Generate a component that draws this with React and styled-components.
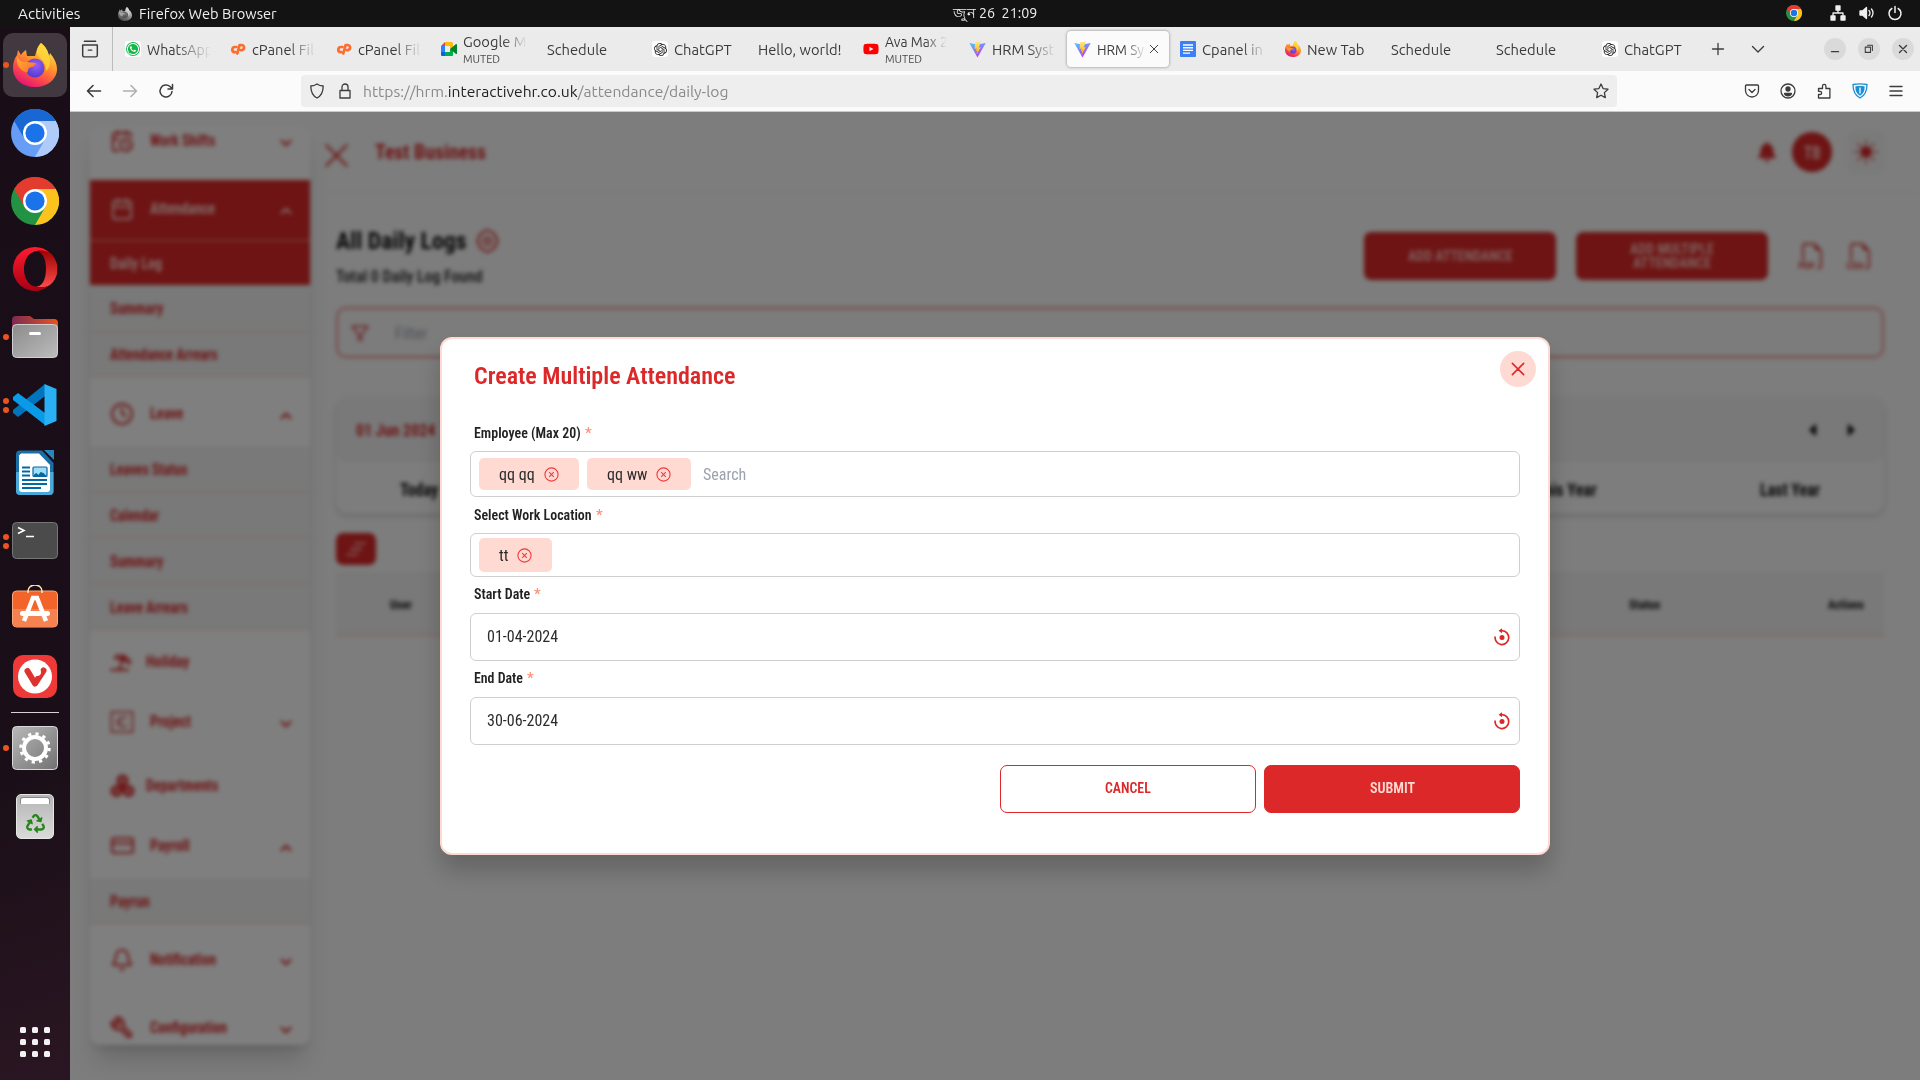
import React, { useLayoutEffect, useRef, useState } from 'react';
import styled, { createGlobalStyle, css } from 'styled-components';
import { Calendar, CalendarClock, Clock, CreditCard, Bell, Wrench, ChevronDown, ChevronUp, Filter } from 'lucide-react';
import { FaUmbrellaBeach, FaWhatsapp, FaYoutube, FaBell, FaRecycle } from 'react-icons/fa';
import { BsFiletypePdf, BsFiletypeCsv, BsSunFill } from 'react-icons/bs';
import { SiOpenai } from 'react-icons/si';

const RED = '#dc2828';
const PINK = '#ffdad3';

const Global = createGlobalStyle`
  * { box-sizing: border-box; }
  html, body { margin: 0; width: 1920px; height: 1080px; overflow: hidden; background: #131313; }
  body { font-family: 'Ubuntu', 'Noto Sans', 'Open Sans', sans-serif; }
  svg { display: block; flex: none; }
  button { font: inherit; cursor: pointer; padding: 0; }
`;

const COND = "'Roboto Condensed', Roboto, 'Liberation Sans', sans-serif";

/* ---------- fitted text ---------- */
const FitBox = styled.span`
  display: inline-block;
  flex: none;
  white-space: pre;
  text-align: left;
`;
const FitInner = styled.span`
  display: inline-block;
  transform-origin: 0 50%;
`;
function Fit({ w, children }) {
  const ref = useRef(null);
  const [k, setK] = useState(1);
  useLayoutEffect(() => {
    if (ref.current) setK(w / ref.current.offsetWidth);
  }, [w]);
  return (
    <FitBox style={{ width: w }}>
      <FitInner ref={ref} style={{ transform: `scaleX(${k})` }}>{children}</FitInner>
    </FitBox>
  );
}

/* ---------- logos ---------- */
const FirefoxLogo = ({ size = 44, grey }) => (
  <svg width={size} height={size} viewBox="0 0 44 44" style={grey ? { filter: 'grayscale(1)' } : undefined}>
    <defs>
      <linearGradient id="fxA" x1=".8" y1="0" x2=".25" y2="1">
        <stop offset="0" stopColor="#fff14f" /><stop offset=".4" stopColor="#ff9a2b" />
        <stop offset=".7" stopColor="#ff4a48" /><stop offset="1" stopColor="#e0107a" />
      </linearGradient>
      <radialGradient id="fxB" cx=".55" cy=".35" r=".7">
        <stop offset="0" stopColor="#9a5cff" /><stop offset="1" stopColor="#4d3bbf" />
      </radialGradient>
      <linearGradient id="fxC" x1="0" y1="0" x2="1" y2="1">
        <stop offset="0" stopColor="#ffb52e" /><stop offset="1" stopColor="#ff6a2e" />
      </linearGradient>
    </defs>
    <path d="M28 0c5 4 7 8 8 13l1-3c4 5 7 10 7 16 0 10-9 18-22 18S0 36 0 25c0-5 1-9 4-13l1-5 3 5c1-2 3-4 5-5l1 6 8 0c2-6 2-9 6-13z" fill="url(#fxA)" />
    <circle cx="22" cy="25" r="9.5" fill="url(#fxB)" />
    <path d="M4 13c2 5 5 6 10 6l9 1c-1 4-5 4-7 5-2 2 0 6-4 4C5 26 3 19 4 13z" fill="url(#fxC)" />
    <path d="M28 0c5 4 7 8 8 13 2 6 1 12-3 15 0-7-3-11-7-14-3-3-3-9 2-14z" fill="#ffd93b" opacity=".75" />
  </svg>
);
const ChromeLogo = ({ size = 48, c = ['#e33b2e', '#fcc31e', '#229342'] }) => (
  <svg width={size} height={size} viewBox="0 0 48 48">
    <circle cx="24" cy="24" r="24" fill={c[2]} />
    <path d="M24 12h20.8A24 24 0 0 1 24 48l10.4-18z" fill={c[1]} />
    <path d="M3.2 12A24 24 0 0 1 44.8 12H24L13.6 30z" fill={c[0]} />
    <circle cx="24" cy="24" r="12" fill="#fff" />
    <circle cx="24" cy="24" r="9.6" fill="#1a73e8" />
  </svg>
);
const OperaLogo = () => (
  <svg width="44" height="44" viewBox="0 0 44 44">
    <defs>
      <linearGradient id="opA" x1="0" y1="0" x2="0" y2="1"><stop offset="0" stopColor="#ff1b2d" /><stop offset="1" stopColor="#a70014" /></linearGradient>
      <linearGradient id="opB" x1="0" y1="0" x2="0" y2="1"><stop offset="0" stopColor="#9c0000" /><stop offset="1" stopColor="#ff4b4b" /></linearGradient>
    </defs>
    <path d="M22 4c10 0 22 4 22 18S34 40 22 40c8 0 11-9 11-18S30 4 22 4z" fill="url(#opB)" />
    <path d="M24 3c8 0 14 2 16 6 6 8 6 18 0 26-4 5-10 6-16 5 6-1 10-8 10-18S30 4 24 3z" fill="url(#opB)" />
    <path fillRule="evenodd" d="M22 0c6 0 11 2 15 6-4-2-8-3-13-2-8 1-13 8-13 18s5 17 13 18c5 1 9 0 13-2A22 22 0 1 1 22 0z" fill="url(#opA)" />
  </svg>
);
const FilesLogo = () => (
  <svg width="46" height="42" viewBox="0 0 46 42">
    <defs>
      <linearGradient id="flA"><stop offset="0" stopColor="#7b2a52" /><stop offset="1" stopColor="#e95420" /></linearGradient>
      <linearGradient id="flB" x1="0" y1="0" x2="1" y2="1"><stop offset="0" stopColor="#8b8b8b" /><stop offset="1" stopColor="#bcbcbc" /></linearGradient>
    </defs>
    <path d="M0 4a4 4 0 0 1 4-4h14l4 3h20a4 4 0 0 1 4 4v12H0z" fill="url(#flA)" />
    <rect x=".5" y="8.500" width="45" height="33" rx="4" fill="url(#flB)" stroke="#d0d0d0" />
    <rect x="17" y="16" width="12" height="3" rx="1.500" fill="#fff" />
  </svg>
);
const CodeLogo = () => (
  <svg width="44" height="44" viewBox="0 0 44 44">
    <path d="M32 1v12L5 34 0 30v-3z" fill="#0074bc" />
    <path d="M0 14l5-4 27 20v12L0 17z" fill="#0a9ae8" />
    <path d="M31.500 1l12 5v32l-12 5z" fill="#29b0f5" />
  </svg>
);
const WriterLogo = () => (
  <svg width="38" height="46" viewBox="0 0 38 46">
    <path d="M4 .5h22L37.500 13v28a4 4 0 0 1-4 4H4a4 4 0 0 1-4-4V4.500a4 4 0 0 1 4-4z" fill="#1a6ea5" />
    <path d="M0 22h37.500v19a4 4 0 0 1-4 4H4a4 4 0 0 1-4-4z" fill="#4aa9d9" />
    <path d="M28 0h10v10z" fill="#2a86bd" />
    <path d="M5 3.500h18L34 15v24a3 3 0 0 1-3 3H6a3 3 0 0 1-3-3V5.500z" fill="#fff" />
    <path d="M6 17.500h8M6 21.500h8M6 25.500h8M6 30h25M6 34h25M6 38h19" stroke="#0369a3" strokeWidth="1.800" />
    <rect x="17" y="17" width="14" height="9.500" rx="1" fill="#9fdcf8" stroke="#0369a3" strokeWidth="1.200" />
    <path d="M17.500 26c1-3 3-4 5-1l2-3 3 1 3 3z" fill="#0369a3" />
  </svg>
);
const TerminalLogo = () => (
  <svg width="46" height="38" viewBox="0 0 46 38">
    <rect x=".5" y=".5" width="45" height="36" rx="4" fill="#4b4b4b" stroke="#767676" />
    <path d="M6 5.500l6 3-6 3M14 14.500h8" fill="none" stroke="#fff" strokeWidth="1.600" />
  </svg>
);
const SoftwareLogo = () => (
  <svg width="46" height="49" viewBox="0 0 46 49">
    <rect x=".5" y="6" width="45" height="36" rx="4" fill="#f26429" stroke="#f9a77d" />
    <path d="M1 24h44v14a4 4 0 0 1-4 4H5a4 4 0 0 1-4-4z" fill="#f58250" />
    <path d="M16 8V6a7 6 0 0 1 14 0v2" fill="none" stroke="#fde3a8" strokeWidth="1.600" />
    <path d="M12 36l9-23h4l9 23" fill="none" stroke="#fff" strokeWidth="4.500" />
    <rect x="8" y="26" width="30" height="5" rx="2.500" fill="#fff" />
  </svg>
);
const VivaldiLogo = () => (
  <svg width="44" height="44" viewBox="0 0 44 44">
    <rect width="44" height="43" rx="10" fill="#ef3939" />
    <circle cx="22" cy="21.500" r="17" fill="#fff" />
    <path d="M14.500 16L22 28.500 30.500 15.500" fill="none" stroke="#dd3330" strokeWidth="6" strokeLinecap="round" strokeLinejoin="round" />
    <circle cx="24" cy="17" r="4" fill="#fff" />
  </svg>
);
const SettingsLogo = () => (
  <svg width="46" height="46" viewBox="0 0 46 46">
    <defs><linearGradient id="stA" x1="0" y1="0" x2="1" y2="1"><stop offset="0" stopColor="#b9b9b9" /><stop offset="1" stopColor="#717171" /></linearGradient></defs>
    <rect x=".5" y="1.500" width="45" height="43" rx="4" fill="url(#stA)" stroke="#d8d8d8" />
    <circle cx="23" cy="23" r="11" fill="none" stroke="#fff" strokeWidth="4" />
    <circle cx="23" cy="23" r="14.200" fill="none" stroke="#fff" strokeWidth="3" strokeDasharray="3.200 4.235" />
  </svg>
);
const TrashBody = styled.div`
  width: 38px; height: 45px; border-radius: 5px;
  background: linear-gradient(#b5b5b5, #dadada);
  border: 1px solid #e6e6e6;
  display: flex; flex-direction: column; align-items: center; gap: 10px;
  padding-top: 2px; color: #26861d;
`;
const TrashSlot = styled.div`
  width: 30px; height: 7px; border-radius: 3px 3px 0 0; background: #fff; border: 1px solid #8a8a8a; border-bottom: 0;
`;
const AppsGrid = styled.div`
  display: grid; grid-template-columns: repeat(3, 6px); grid-auto-rows: 6px; align-content: start; gap: 6px;
  i { width: 6px; height: 6px; border-radius: 1.5px; background: #f2f2f2; }
`;
const ViteLogo = () => (
  <svg width="17" height="17" viewBox="0 0 17 17">
    <defs>
      <linearGradient id="vtA" x1="0" y1="0" x2=".6" y2="1"><stop offset="0" stopColor="#41d1ff" /><stop offset="1" stopColor="#bd34fe" /></linearGradient>
      <linearGradient id="vtB" x1="0" y1="0" x2="0" y2="1"><stop offset="0" stopColor="#ffea83" /><stop offset="1" stopColor="#ffa800" /></linearGradient>
    </defs>
    <path d="M.3 2l8 1.400L16.700 2 8.500 16.500z" fill="url(#vtA)" />
    <path d="M12 .2L6 1.400 5.600 8l1.900-.4-.5 2.600 1.300-.4-.8 4.200 4.300-7.800-2 .4z" fill="url(#vtB)" />
  </svg>
);
const CpanelLogo = () => (
  <svg width="16" height="16" viewBox="0 0 16 16" fill="none" stroke="#ff6c2c" strokeWidth="2.700" strokeLinecap="round" strokeLinejoin="round">
    <path d="M6.500 6H4.800a2.600 2.600 0 0 0-.6 5.100h1.300" />
    <path d="M7.300 12.500L9.600 4h2.200a2.600 2.600 0 0 1 .3 5.100h-1.300" />
  </svg>
);
const MeetLogo = () => (
  <svg width="16" height="16" viewBox="0 0 16 16">
    <path d="M0 5l4-4v4z" fill="#ea4335" /><path d="M4 1h7v4H4z" fill="#fbbc04" />
    <path d="M0 5h4v6H0z" fill="#2684fc" /><path d="M0 11h4v4H1a1 1 0 0 1-1-1z" fill="#0066da" />
    <path d="M4 11h5V8l3-2v8a1 1 0 0 1-1 1H4z" fill="#00ac47" />
    <path d="M11 1l1 1v4L9 8V5h2z" fill="#fbbc04" /><path d="M9 8l6-5c.5-.3 1 0 1 .5v9c0 .5-.5.800-1 .5z" fill="#00832d" />
  </svg>
);
const DocsLogo = () => (
  <svg width="16" height="16" viewBox="0 0 16 16">
    <rect width="16" height="16" rx="1" fill="#3d7ff5" />
    <path d="M3 4h10M3 6.700h10M3 9.400h10M3 12.100h7" stroke="#fff" strokeWidth="1.400" />
  </svg>
);
const White = styled.span`
  display: flex; align-items: center; justify-content: center; flex: none;
  width: 16px; height: 16px; border-radius: 3px; background: #fff; color: ${p => p.$c || '#222'};
`;

/* ---------- line icons ---------- */
const Line = ({ s = 16, d, w = 1.4, c = '#3c3c3c', children }) => (
  <svg width={s} height={s} viewBox="0 0 16 16" fill="none" stroke={c} strokeWidth={w} strokeLinecap="round" strokeLinejoin="round">
    {d && <path d={d} />}{children}
  </svg>
);

/* ---------- system bar ---------- */
const Screen = styled.div`
  width: 1920px; height: 1080px; display: flex; flex-direction: column; overflow: hidden; background: #131313;
`;
const SystemBar = styled.header`
  height: 27px; flex: none; display: grid; grid-template-columns: 1fr auto 1fr; align-items: center;
  color: #f0f0f0; font-size: 14px; line-height: 20px;
`;
const BarLeft = styled.div`
  display: flex; align-items: center; padding-left: 18px;
  svg { margin: 0 7px 0 38px; }
`;
const BarClock = styled.div`display: flex; align-items: center; gap: 4px; padding: 0 0 1px 70px; margin-left: -1px; width: 154px;`;
const BarRight = styled.div`
  display: flex; align-items: center; justify-content: flex-end; padding: 0 17px 1px 0; gap: 12.5px;
  svg:first-child { margin-right: 16px; }
`;
const Below = styled.div`display: flex; flex: 1; min-height: 0;`;

/* ---------- dock ---------- */
const Dock = styled.nav`
  width: 70px; flex: none; display: flex; flex-direction: column; padding-top: 4px;
  background: linear-gradient(160deg, #190e17 0%, #1a0f18 70%, #2a1622 100%);
`;
const Slot = styled.div`
  height: ${p => p.$h || 68}px; flex: none; display: grid; grid-template-columns: 3px 64px 3px; align-items: center;
`;
const SlotInner = styled.div`
  height: 64px; border-radius: 10px; display: flex; align-items: center; justify-content: center;
  ${p => p.$on && css`background: #423840;`}
`;
const Dots = styled.div`
  width: 6px; display: flex; flex-direction: column; gap: 3px; position: relative; left: 3px; z-index: 1;
  i { width: 6px; height: 6px; border-radius: 50%; background: #e95420; }
`;
const DockRule = styled.div`height: 1px; width: 48px; margin: 1px auto 1px; background: #d6d2d5;`;
const DockEnd = styled.div`margin-top: auto; height: 53px; display: flex; justify-content: center;`;

/* ---------- browser ---------- */
const Browser = styled.div`flex: 1; min-width: 0; display: flex; flex-direction: column; background: #fbfbfb;`;
const TabBar = styled.div`height: 44px; flex: none; display: flex; align-items: center; background: #ebebeb; color: #3a3a3a; font-size: 14px;`;
const TabsHome = styled.div`width: 42.500px; height: 44px; display: flex; align-items: center; justify-content: center; padding-right: 2px; border-right: 1px solid #bcbcbc;`;
const TabList = styled.div`display: flex; padding-left: 3px;`;
const Tab = styled.div`
  width: 105.500px; height: 44px; padding: 4px 2px;
`;
const TabFace = styled.div`
  height: 36px; border-radius: 4px; display: flex; align-items: center; gap: 6px; padding: 0 7px;
  ${p => p.$active && css`background: #fbfbfb; box-shadow: 0 0 3px rgba(0,0,0,.45);`}
`;
const TabText = styled.div`
  flex: 1; min-width: 0; overflow: hidden; display: flex; flex-direction: column; line-height: 18px; padding-top: 1px;
  ${p => p.$fade && css`mask-image: linear-gradient(90deg, #000 ${p.$fade}px, transparent ${p.$end || 64}px); max-width: 66px;`}
  ${p => p.$two && css`padding-top: 0;`}
  small { font-size: 11px; line-height: 14px; margin-top: 1px; color: #4a4a4a; }
`;
const TabClose = styled.span`display: flex; margin: 0 2px 0 -4px;`;
const TabTools = styled.div`display: flex; align-items: center; gap: 24px; padding-left: 12px; flex: 1;`;
const WinButtons = styled.div`display: flex; gap: 12px; padding-right: 6px;`;
const WinButton = styled.button`width: 22px; height: 22px; border: 0; border-radius: 50%; background: #dadada; display: flex; align-items: center; justify-content: center;`;
const NavBar = styled.div`
  height: 41px; flex: none; display: flex; align-items: center; border-bottom: 1px solid #c9c9c9; padding-left: 16px;
`;
const NavButtons = styled.div`display: flex; gap: 20px; width: 215px;`;
const UrlBar = styled.div`
  width: 1316px; height: 32px; border-radius: 4px; background: #eeeeee; display: flex; align-items: center;
  padding: 0 8px; gap: 12px; font-size: 15px; color: #8a8a8a;
  b { font-weight: 400; color: #222; }
`;
const UrlText = styled.span`margin-left: -2px; display: flex;`;
const Push = styled.span`margin-left: auto;`;
const NavEnd = styled.div`display: flex; gap: 20px; margin-left: auto; padding-right: 16px;`;

/* ---------- page ---------- */
const Viewport = styled.main`position: relative; flex: 1; min-height: 0; overflow: hidden; background: #fafafa;`;
const Page = styled.div`display: flex; width: 1850px; height: 968px; font-family: ${COND}; color: #111;`;
const SideWrap = styled.aside`width: 254px; flex: none; padding: 14px 0 0 20px;`;
const Side = styled.div`
  width: 220px; height: 919px; background: #fff; border-radius: 10px; overflow: hidden; display: flex; flex-direction: column;
  color: ${RED}; font-weight: 700;
`;
const SideShadow = styled.div`border-radius: 10px; width: 220px; box-shadow: 0 20px 25px -6px rgba(0,0,0,.16), 0 6px 10px -5px rgba(0,0,0,.16);`;
const SideItem = styled.div`
  height: ${p => p.$h}px; flex: none; display: flex; align-items: center; padding: 0 15px 0 20px; font-size: 16px; line-height: 20px;
  ${p => p.$pt && css`padding-top: ${p.$pt}px;`}
  ${p => p.$pb && css`padding-bottom: ${p.$pb}px;`}
  ${p => p.$active && css`background: ${RED}; color: #ffd5d0;`}
`;
const SideIcon = styled.span`width: ${p => p.$w || 40}px; display: flex;`;
const Chevron = styled.span`margin-left: auto; padding-top: 4px; display: flex;`;
const SubItem = styled.div`
  height: ${p => p.$h}px; flex: none; display: flex; align-items: center; padding: 3px 0 0 20px; font-size: 16px; line-height: 20px;
  background: #f2f2f2; border-bottom: 1.5px solid #f5cfca;
  ${p => p.$active && css`background: ${RED}; color: #ffd5d0; padding-top: 1px; border-top: 1.5px solid #f7a8a0; border-bottom: 0;`}
`;
const Content = styled.section`flex: 1; min-width: 0; display: flex; flex-direction: column;`;
const TopRow = styled.div`height: 81px; display: flex; align-items: center; border-bottom: 1px solid #f5f5f5; padding: 0 35px 0 0; color: ${RED};`;
const Burger = styled.span`padding-top: 6px; display: flex;`;
const Brand = styled.div`font-size: 20px; font-weight: 700; margin: 0 0 0 26px;`;
const TopRight = styled.div`margin-left: auto; display: flex; align-items: center; gap: 15px;`;
const Avatar = styled.div`width: 40px; height: 40px; border-radius: 50%; background: ${RED}; color: #ffd5d0; font-weight: 600; font-size: 18px; display: flex; align-items: center; justify-content: center;`;
const ThemeBox = styled.div`width: 38px; height: 43px; border-radius: 8px; background: #f5f5f5; display: flex; align-items: center; justify-content: center;`;
const Body = styled.div`padding: 37px 36px 0 12px; display: flex; flex-direction: column;`;
const HeadRow = styled.div`display: flex; justify-content: space-between; height: 77px;`;
const HeadText = styled.div`margin-top: -6px;`;
const Heading = styled.div`font-size: 24px; line-height: 32px; font-weight: 700; display: flex; align-items: center; gap: 9px; height: 36px; padding-bottom: 2px;`;
const Sub = styled.div`font-size: 17px; line-height: 34px; color: #222; font-weight: 500; margin-top: -1px;`;
const Actions = styled.div`display: flex; align-items: center; gap: 20px; height: 49px; margin-top: 1px; padding-right: 11px; color: ${RED};`;
const BigButton = styled.button`
  width: 192px; height: 48px; border: 0; border-radius: 7px; background: ${RED}; color: #ffc9c2; font-size: 15px; line-height: 14px; font-weight: 600;
  display: flex; flex-direction: column; align-items: center; justify-content: center;
`;
const FileIcons = styled.div`display: flex; gap: 22px; margin-left: 11px;`;
const FilterBox = styled.div`
  height: 51px; border: 2px solid #f08c88; border-radius: 10px; background: #f8f8f8; display: flex; align-items: center; gap: 26px;
  padding-left: 13px; font-size: 17px; color: #9ca3af;
`;
const Range = styled.div`
  margin-top: 40px; border-radius: 12px; overflow: hidden; background: #fafafa; box-shadow: 0 2px 5px rgba(0,0,0,.18); height: 116px;
`;
const RangeTop = styled.div`
  height: 64px; background: #f2f2f2; border-radius: 12px; display: flex; align-items: center; justify-content: space-between; padding: 0 25px 0 20px;
  color: ${RED}; font-size: 17px; font-weight: 700;
`;
const Arrows = styled.div`display: flex; gap: 22px;`;
const RangeTabs = styled.div`
  height: 54px; display: grid; grid-template-columns: 166px 1fr 180px 260px 188px; align-items: center; justify-items: center; font-size: 18px; font-weight: 700;
`;
const Toggle = styled.button`margin-top: 19px; width: 40px; height: 32px; border: 0; border-radius: 7px; background: ${RED}; display: flex; align-items: center; justify-content: center;`;
const TableHead = styled.div`
  margin-top: 7px; height: 64px; background: #f2f2f2; border-bottom: 2px solid #fbd5cc; display: grid; grid-template-columns: 130px 1fr 130px 99px 76px;
  align-items: center; justify-items: center; font-size: 13px; font-weight: 700; padding-top: 2px;
`;

/* ---------- modal ---------- */
const Backdrop = styled.div`
  position: absolute; inset: 0; background: rgba(0,0,0,.5); backdrop-filter: blur(2px);
  display: flex; align-items: flex-start; padding: 225px 0 0 370px; font-family: ${COND};
`;
const Dialog = styled.div`
  width: 1110px; height: 518px; background: #fff; border: 2px solid ${PINK}; border-radius: 12px; padding: 12px 28px 0;
  box-shadow: 0 16px 24px rgba(0,0,0,.2); display: flex; flex-direction: column; color: #222;
`;
const DialogHead = styled.div`display: flex; justify-content: space-between; height: 62px; margin-right: -16px; padding-left: 4px;`;
const Title = styled.h2`margin: 9px 0 0; font-size: 24px; line-height: 32px; font-weight: 600; color: ${RED};`;
const Close = styled.button`width: 36px; height: 36px; border: 0; border-radius: 50%; background: ${PINK}; display: flex; align-items: center; justify-content: center;`;
const Field = styled.div`display: flex; flex-direction: column; height: ${p => p.$h}px;`;
const Label = styled.label`
  font-size: 15px; line-height: 20px; font-weight: 650; padding-left: 4px; height: ${p => p.$h}px; padding-top: ${p => p.$pt}px;
  display: flex; gap: 4px;
  em { font-style: normal; font-weight: 500; color: #ff8f78; }
`;
const Box = styled.div`
  height: ${p => p.$h}px; border: 1px solid #cfcfcf; border-radius: 6px; display: flex; align-items: center; gap: 8px;
  padding: 0 9px 0 ${p => (p.$date ? 16 : 8)}px; font-size: 16px; color: #2b2b2b;
`;
const DateText = styled.span`margin-bottom: 2px; display: flex;`;
const Tag = styled.span`
  height: ${p => p.$h}px; width: ${p => p.$w}px; border-radius: 5px; background: ${PINK}; display: flex; align-items: center; gap: 8.5px; padding-left: 20px;
`;
const Placeholder = styled.span`color: #9ca3af; margin-left: 4px;`;
const Footer = styled.div`display: flex; justify-content: flex-end; gap: 8px; margin-top: 20px;`;
const Action = styled.button`
  width: 256px; height: 48px; border-radius: 7px; border: 1px solid ${RED}; font-size: 15px; font-weight: 600; padding-bottom: 2px;
  background: ${p => (p.$solid ? RED : '#fff')}; color: ${p => (p.$solid ? '#ffdad3' : RED)};
`;

const TagX = () => (
  <svg width="15" height="15" viewBox="0 0 15 15" fill="none" stroke="#ee3b3b" strokeWidth="1.100">
    <circle cx="7.500" cy="7.500" r="6.600" /><path d="M5.200 5.200l4.600 4.600M9.800 5.200L5.200 9.800" />
  </svg>
);
const ResetIcon = () => (
  <svg width="16" height="18" viewBox="0 0 16 18" fill="none" stroke={RED} strokeWidth="1.700">
    <path d="M1.200 8.500A6.800 7 0 1 0 8 2.600H6" /><path d="M8 .2L4.600 2.700 8 5.200z" fill={RED} stroke="none" />
    <circle cx="8" cy="9.500" r="2.500" fill={RED} stroke="none" />
  </svg>
);
const ProjectIcon = () => (
  <svg width="24" height="24" viewBox="0 0 24 24" fill="none" stroke="currentColor" strokeWidth="1.500">
    <rect x="1.500" y="2" width="21" height="20" /><path d="M15.500 9V7.500h-5L8 10v4l2.500 2.500h5V15M8 12h4" />
  </svg>
);
const DepartmentsIcon = () => (
  <svg width="25" height="24" viewBox="0 0 25 24" fill="currentColor" fillOpacity=".6" stroke="currentColor" strokeWidth="2.400">
    <circle cx="12.500" cy="6.500" r="4.800" /><circle cx="6.500" cy="17" r="4.800" /><circle cx="18.500" cy="17" r="4.800" />
    <circle cx="12.500" cy="13" r="1.500" />
  </svg>
);

const tabs = [
  { icon: <White><FaWhatsapp size={14} color="#fff" style={{ background: '#12b84a', borderRadius: 8 }} /></White>, t: 'WhatsApp', w: 66, fade: 28 },
  { icon: <CpanelLogo />, t: 'cPanel Fil', w: 62, fade: 36 },
  { icon: <CpanelLogo />, t: 'cPanel Fil', w: 62, fade: 36 },
  { icon: <MeetLogo />, t: 'Google M', w: 63, fade: 40, muted: true },
  { t: 'Schedule', w: 60 },
  { icon: <White><SiOpenai size={13} /></White>, t: 'ChatGPT', w: 58 },
  { t: 'Hello, world!', w: 84 },
  { icon: <FaYoutube size={16} color="#ff0000" />, t: 'Ava Max 2', w: 63, fade: 40, end: 62, muted: true },
  { icon: <ViteLogo />, t: 'HRM Syst', w: 62, fade: 36 },
  { icon: <ViteLogo />, t: 'HRM Sy', w: 47, fade: 26, end: 50, active: true },
  { icon: <DocsLogo />, t: 'Cpanel in', w: 61, fade: 40 },
  { icon: <FirefoxLogo size={16} />, t: 'New Tab', w: 57 },
  { t: 'Schedule', w: 60 },
  { t: 'Schedule', w: 60 },
  { icon: <White><SiOpenai size={13} /></White>, t: 'ChatGPT', w: 58 },
];

const dock = [
  { el: <FirefoxLogo />, dots: 1, on: true },
  { el: <ChromeLogo c={['#1967d2', '#aecbfa', '#669df6']} /> },
  { el: <ChromeLogo /> },
  { el: <OperaLogo /> },
  { el: <FilesLogo />, dots: 1 },
  { el: <CodeLogo />, dots: 2 },
  { el: <WriterLogo /> },
  { el: <TerminalLogo />, dots: 2 },
  { el: <SoftwareLogo /> },
  { el: <VivaldiLogo /> },
];
const DockSlot = ({ el, dots = 0, on }) => (
  <Slot>
    <Dots>{Array.from({ length: dots }, (_, i) => <i key={i} />)}</Dots>
    <SlotInner $on={on}>{el}</SlotInner>
  </Slot>
);

const MenuItem = ({ icon, label, w, iw, open, leaf, ...rest }) => (
  <SideItem {...rest}>
    <SideIcon $w={iw}>{icon}</SideIcon>
    <Fit w={w}>{label}</Fit>
    {!leaf && <Chevron>{open ? <ChevronUp size={18} strokeWidth={3} /> : <ChevronDown size={18} strokeWidth={3} />}</Chevron>}
  </SideItem>
);
const SubRow = ({ label, w, ...rest }) => <SubItem {...rest}><Fit w={w}>{label}</Fit></SubItem>;

function Chrome() {
  return (
    <>
      <TabBar>
        <TabsHome><Line s={18} d="M3 1.200h10M1.500 4.500h13v9a1.500 1.500 0 0 1-1.500 1.500h-10a1.500 1.500 0 0 1-1.500-1.500zM6.500 9h3" w={1.3} /></TabsHome>
        <TabList>
          {tabs.map((t, i) => (
            <Tab key={i}>
              <TabFace $active={t.active}>
                {t.icon}
                <TabText $fade={t.fade} $end={t.end} $two={t.muted}>
                  <Fit w={t.w}>{t.t}</Fit>
                  {t.muted && <small><Fit w={37}>MUTED</Fit></small>}
                </TabText>
                {t.active && <TabClose><Line s={12} w={1.3} d="M3 3l10 10M13 3L3 13" /></TabClose>}
              </TabFace>
            </Tab>
          ))}
        </TabList>
        <TabTools>
          <Line d="M8 2.500v11M2.500 8h11" w={1.3} />
          <Line d="M2.500 5.500L8 11l5.500-5.500" w={1.4} />
        </TabTools>
        <WinButtons>
          <WinButton><Line s={14} d="M4 11h8" w={1.6} /></WinButton>
          <WinButton><Line s={12} d="M3 5.500h7v7H3zM6 3h6.500v7" w={1.4} /></WinButton>
          <WinButton><Line s={14} d="M4 4l8 8M12 4l-8 8" w={1.6} /></WinButton>
        </WinButtons>
      </TabBar>
      <NavBar>
        <NavButtons>
          <Line d="M14.500 8h-13M7 2.500L1.500 8 7 13.500" w={1.6} />
          <Line d="M1.500 8h13M9 2.500L14.500 8 9 13.500" w={1.6} c="#b0b0b0" />
          <Line d="M14 8.500A6 6 0 1 1 12 3.500l2 2M14.500 1.500v4.500H10" w={1.5} />
        </NavButtons>
        <UrlBar>
          <Line d="M8 1C6 2.500 4 3 1.800 3c0 6 1.200 9.500 6.200 12 5-2.500 6.200-6 6.200-12C12 3 10 2.500 8 1z" w={1.3} />
          <Line d="M3 7.500h10v7.500H3zM5 7.500V4a3 3 0 0 1 6 0v3.500" w={1.3} />
          <UrlText><Fit w={365}>https://hrm.<b>interactivehr.co.uk</b>/attendance/daily-log</Fit></UrlText>
          <Push><Line d="M8 1l2.100 4.600 4.900.6-3.600 3.400.9 5L8 12.200 3.700 14.600l.9-5L1 6.200l4.900-.6z" w={1.3} /></Push>
        </UrlBar>
        <NavEnd>
          <Line d="M2.500 2h11a1 1 0 0 1 1 1v4.500a6.500 6.500 0 0 1-13 0V3a1 1 0 0 1 1-1zM5 6.500l3 3 3-3" w={1.3} />
          <Line w={1.3}><circle cx="8" cy="8" r="7" /><circle cx="8" cy="6" r="2" fill="#3c3c3c" /><path d="M4.500 10.500h7c-1 3-6 3-7 0z" fill="#3c3c3c" /></Line>
          <Line d="M2.500 5.500h4V3a1.700 1.700 0 0 1 3.400 0v2.500h4V15H2.500v-3.500H4a1.600 1.600 0 0 0 0-3.200H2.500z" w={1.3} />
          <Line w={1.3} c="#1a8fd6"><path d="M1 1.500c5-1 9-1 14 0 0 6-2 11-7 13.500C3 12.500 1 7.500 1 1.500z" /><path d="M4 4c3-.7 5-.7 8 0 0 4-1.500 6.500-4 8-2.500-1.500-4-4-4-8z" fill="#1a8fd6" /><path d="M8 5v5" stroke="#fff" /></Line>
          <Line d="M2 3.500h12M2 8h12M2 12.500h12" w={1.4} />
        </NavEnd>
      </NavBar>
    </>
  );
}

function Sidebar() {
  return (
    <SideWrap>
      <SideShadow>
        <Side>
          <MenuItem $h={54} $pb={25} icon={<CalendarClock size={24} />} label="Work Shifts" w={65} />
          <MenuItem $h={60} $pb={3} $active icon={<Calendar size={24} />} label="Attendance" w={65} open />
          <SubRow $h={45} $active label="Daily Log" w={52} />
          <SubRow $h={46.5} label="Summary" w={53} />
          <SubRow $h={45.5} label="Attendance Arrears" w={108} />
          <MenuItem $h={69} $pt={5} icon={<Clock size={24} />} label="Leave" w={33} open />
          <SubRow $h={46} label="Leaves Status" w={78} />
          <SubRow $h={45.5} label="Calendar" w={49} />
          <SubRow $h={46} label="Summary" w={53} />
          <SubRow $h={46} label="Leave Arrears" w={78} />
          <MenuItem $h={62} $pt={3} iw={36} icon={<FaUmbrellaBeach size={21} />} label="Holiday" w={43} leaf />
          <MenuItem $h={58} $pt={2} icon={<ProjectIcon />} label="Project" w={41} />
          <MenuItem $h={68} $pt={4} iw={36} icon={<DepartmentsIcon />} label="Departments" w={72} leaf />
          <MenuItem $h={60} $pb={4} icon={<CreditCard size={25} />} label="Payroll" w={40} open />
          <SubRow $h={46} label="Payrun" w={40} />
          <MenuItem $h={72} icon={<Bell size={24} />} label="Notification" w={66} />
          <MenuItem $h={64} icon={<Wrench size={23} strokeWidth={2.6} style={{ transform: 'scaleX(-1)' }} />} label="Configuration" w={77} />
        </Side>
      </SideShadow>
    </SideWrap>
  );
}

function DailyLog() {
  return (
    <Content>
      <TopRow>
        <Burger><Line s={25} w={1.4} c={RED} d="M1.500 1.500l13 13M14.500 1.500l-13 13" /></Burger>
        <Brand><Fit w={111}>Test Business</Fit></Brand>
        <TopRight>
          <FaBell size={20} />
          <Avatar><Fit w={17}>TB</Fit></Avatar>
          <ThemeBox><BsSunFill size={24} /></ThemeBox>
        </TopRight>
      </TopRow>
      <Body>
        <HeadRow>
          <HeadText>
            <Heading><Fit w={131}>All Daily Logs</Fit>
              <svg width="23" height="24" viewBox="0 0 23 24" fill="none" stroke={RED} strokeWidth="2"><path d="M11.500 1l7 4 3 7-3 7-7 4-7-4-3-7 3-7z" /><circle cx="11.500" cy="12" r="3.500" /></svg>
            </Heading>
            <Sub><Fit w={147}>Total 0 Daily Log Found</Fit></Sub>
          </HeadText>
          <Actions>
            <BigButton><Fit w={105}>ADD ATTENDANCE</Fit></BigButton>
            <BigButton><Fit w={84}>ADD MULTIPLE</Fit><Fit w={78}>ATTENDANCE</Fit></BigButton>
            <FileIcons><BsFiletypePdf size={26} /><BsFiletypeCsv size={26} /></FileIcons>
          </Actions>
        </HeadRow>
        <FilterBox><Filter size={18} color={RED} /><Fit w={32}>Filter</Fit></FilterBox>
        <Range>
          <RangeTop>
            <Fit w={79}>01 Jun 2024</Fit>
            <Arrows>
              <Line c="#111"><path d="M10.500 3v10L5 8z" fill="#111" /></Line>
              <Line c="#111"><path d="M5.500 3v10L11 8z" fill="#111" /></Line>
            </Arrows>
          </RangeTop>
          <RangeTabs>
            <Fit w={38}>Today</Fit><span /><span />
            <Fit w={62}>This Year</Fit>
            <Fit w={60}>Last Year</Fit>
          </RangeTabs>
        </Range>
        <Toggle><Line s={20} c="#ffc9c2" w={1.5} d="M7 3.500h8M4 8h8M1 12.500h8" /></Toggle>
        <TableHead>
          <Fit w={22}>User</Fit><span /><Fit w={31}>Status</Fit><span /><Fit w={36}>Actions</Fit>
        </TableHead>
      </Body>
    </Content>
  );
}

function MultipleAttendance() {
  return (
    <Backdrop>
      <Dialog>
        <DialogHead>
          <Title><Fit w={261}>Create Multiple Attendance</Fit></Title>
          <Close><Line s={18} w={1.4} c={RED} d="M3 3l10 10M13 3L3 13" /></Close>
        </DialogHead>
        <Field $h={84}>
          <Label $h={38} $pt={10}><Fit w={107}>Employee (Max 20)</Fit><em>*</em></Label>
          <Box $h={46}>
            <Tag $h={32} $w={100}><Fit w={36}>qq qq</Fit><TagX /></Tag>
            <Tag $h={32} $w={104}><Fit w={40}>qq ww</Fit><TagX /></Tag>
            <Placeholder><Fit w={43}>Search</Fit></Placeholder>
          </Box>
        </Field>
        <Field $h={80}>
          <Label $h={36} $pt={8}><Fit w={118}>Select Work Location</Fit><em>*</em></Label>
          <Box $h={44}><Tag $h={34} $w={73}><Fit w={9}>tt</Fit><TagX /></Tag></Box>
        </Field>
        <Field $h={84}>
          <Label $h={36} $pt={7}><Fit w={56}>Start Date</Fit><em>*</em></Label>
          <Box $h={48} $date><DateText><Fit w={71}>01-04-2024</Fit></DateText><Push><ResetIcon /></Push></Box>
        </Field>
        <Field $h={84}>
          <Label $h={36} $pt={7}><Fit w={49}>End Date</Fit><em>*</em></Label>
          <Box $h={48} $date><DateText><Fit w={71}>30-06-2024</Fit></DateText><Push><ResetIcon /></Push></Box>
        </Field>
        <Footer>
          <Action><Fit w={46}>CANCEL</Fit></Action>
          <Action $solid><Fit w={45}>SUBMIT</Fit></Action>
        </Footer>
      </Dialog>
    </Backdrop>
  );
}

export default function App() {
  return (
    <Screen>
      <Global />
      <SystemBar>
        <BarLeft>
          <Fit w={62}>Activities</Fit>
          <FirefoxLogo size={14} grey />
          <Fit w={138}>Firefox Web Browser</Fit>
        </BarLeft>
        <BarClock><Fit w={22}>জুন</Fit><Fit w={58}>26  21:09</Fit></BarClock>
        <BarRight>
          <ChromeLogo size={16} />
          <Line c="#f0f0f0" w={1.3}><path d="M8 4v4M3 12V8h10v4" /><path d="M6 1h4v4H6zM1 11h4v4H1zM11 11h4v4h-4z" fill="#f0f0f0" /></Line>
          <Line c="#f0f0f0" w={1.3}><path d="M1 6h2.500L7.500 2.500v11L3.500 10H1z" fill="#f0f0f0" /><path d="M10 5.500q2 2.500 0 5M12.500 4q3 4 0 8" /></Line>
          <Line c="#f0f0f0" w={1.5} d="M8 1.500v6M4.800 3.500a6 6 0 1 0 6.400 0" />
        </BarRight>
      </SystemBar>
      <Below>
        <Dock>
          {dock.map((d, i) => <DockSlot key={i} {...d} />)}
          <DockRule />
          <DockSlot el={<SettingsLogo />} dots={1} />
          <DockSlot el={<TrashBody><TrashSlot /><FaRecycle size={19} /></TrashBody>} />
          <DockEnd><AppsGrid>{Array.from({ length: 9 }, (_, i) => <i key={i} />)}</AppsGrid></DockEnd>
        </Dock>
        <Browser>
          <Chrome />
          <Viewport>
            <Page><Sidebar /><DailyLog /></Page>
            <MultipleAttendance />
          </Viewport>
        </Browser>
      </Below>
    </Screen>
  );
}
